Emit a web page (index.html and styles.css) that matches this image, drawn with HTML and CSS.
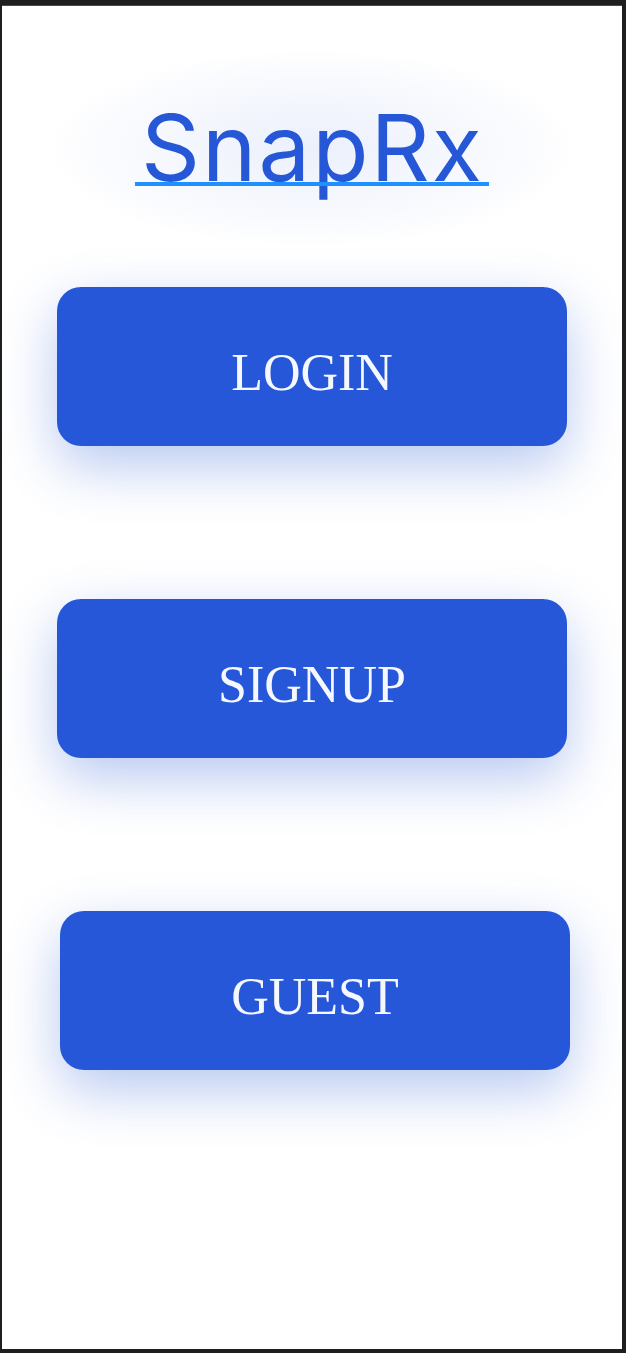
FILE: index.html
```html
<!DOCTYPE html>
<html lang="en">
<head>
<meta charset="utf-8">
<title>SnapRx</title>
<link rel="stylesheet" href="styles.css">
</head>
<body>
<main class="screen">
  <header class="brand">
    <a class="brand-link" href="#">SnapRx</a>
  </header>
  <nav class="actions">
    <button class="action">LOGIN</button>
    <button class="action">SIGNUP</button>
    <button class="action action-guest">GUEST</button>
  </nav>
</main>
</body>
</html>
```

FILE: styles.css
```css
html, body {
  margin: 0;
  padding: 0;
  background: #1e1e1e;
}

body {
  padding: 5px 4px 4px 2px;
  box-sizing: border-box;
  height: 1353px;
}

.screen {
  height: 100%;
  background: #ffffff;
  border-top: 1px solid #4a4a4a;
  box-sizing: border-box;
  display: flex;
  flex-direction: column;
  align-items: center;
  overflow: hidden;
}

.brand {
  margin-top: 42px;
  padding: 40px 90px;
  background: radial-gradient(closest-side, rgba(37, 87, 214, 0.09), rgba(37, 87, 214, 0.03) 70%, rgba(37, 87, 214, 0));
}

.brand-link {
  position: relative;
  display: inline-block;
  padding: 0 5px 0 6px;
  font-family: "Inter", "Noto Sans", sans-serif;
  font-size: 92px;
  line-height: 120px;
  letter-spacing: 2px;
  color: #2557d6;
  text-decoration: none;
}

.brand-link::after {
  content: "";
  position: absolute;
  left: 0;
  right: 0;
  top: 94px;
  height: 4px;
  background: #1e90ff;
}

.actions {
  margin-top: 39px;
  display: flex;
  flex-direction: column;
  align-items: center;
  gap: 153px;
}

.action {
  width: 510px;
  height: 159px;
  border: none;
  border-radius: 24px;
  background: #2557d8;
  color: #f6f8ff;
  font-family: "Liberation Serif", "DejaVu Serif", serif;
  font-size: 52px;
  box-shadow: 0 20px 55px rgba(37, 87, 214, 0.33);
  padding: 12px 0 0;
}

.action-guest {
  margin-left: 6px;
}
```
